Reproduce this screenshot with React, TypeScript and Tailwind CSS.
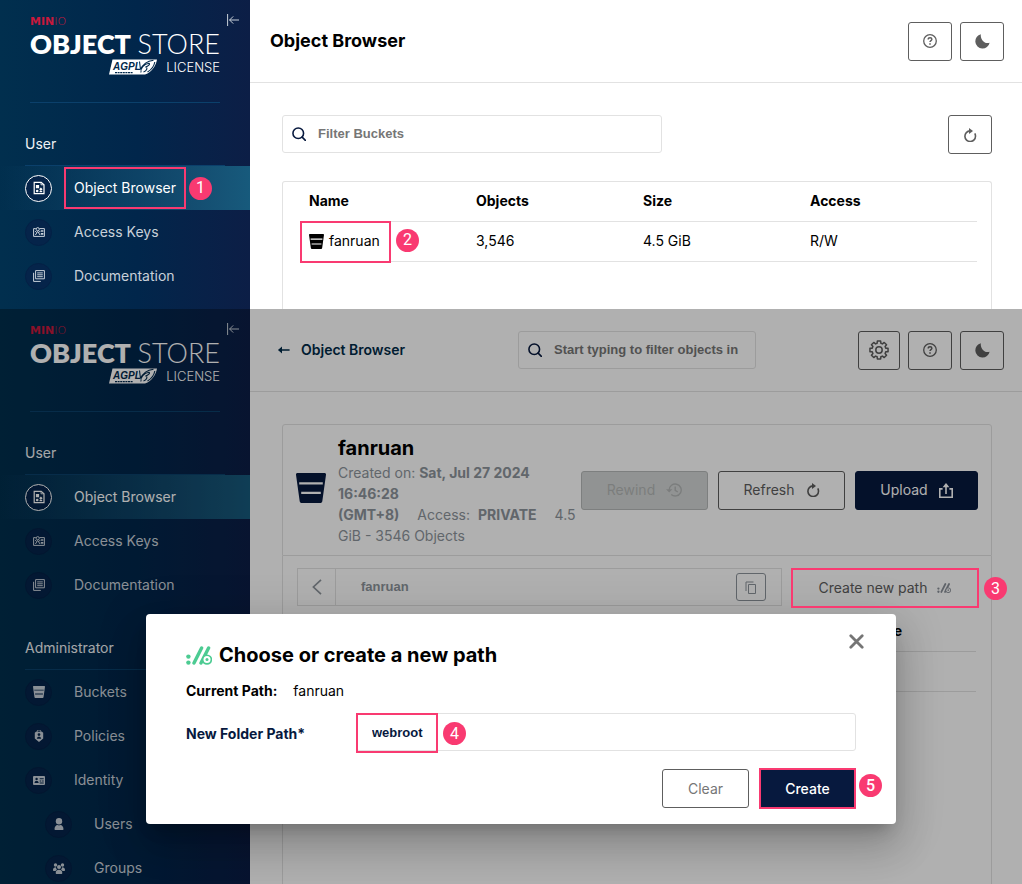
import React from "react";

type IconProps = { className?: string };

const CollapseIcon = () => (
  <svg width="12" height="12" viewBox="0 0 12 12" fill="none" stroke="currentColor" strokeWidth="1">
    <path d="M.6 0v12M2.5 6H12M6.2 2.4 2.6 6l3.6 3.6" />
  </svg>
);

const ObjectBrowserIcon = () => (
  <svg width="12" height="14" viewBox="0 0 12 14" fill="none" stroke="currentColor" strokeWidth="1.2">
    <path d="M1.2 1.4h7l2.8 2.4v8.8H1.2z" />
    <path d="M8 1.2v2.6h3" strokeWidth=".8" />
    <path d="M2.9 4.1h3.2v3.2H2.9zM7.9 6.5l1.7 1.7-1.7 1.7-1.7-1.7z" fill="currentColor" stroke="none" />
    <circle cx="4.2" cy="10" r="1.3" fill="currentColor" stroke="none" />
    <path d="M6.6 10.6h2.6" />
  </svg>
);

const AccessKeysIcon = () => (
  <svg width="12" height="10" viewBox="0 0 12 10" fill="none" stroke="currentColor" strokeWidth="1">
    <path d="M2.8 1.6H.6v7.8h10.8V1.6H6.6" />
    <circle cx="4.7" cy="2.2" r="1.6" />
    <path d="m2.4 8 2.3-3.6L7 8M2.2 4l1.4 1.6M7.2 4 5.8 5.6" />
    <path d="M7.8 3.2h2.6v1.6H7.8zM7.8 6h2.6v1.8H7.8z" fill="currentColor" stroke="none" />
  </svg>
);

const DocumentationIcon = () => (
  <svg width="12" height="12" viewBox="0 0 12 12" fill="none" stroke="currentColor" strokeWidth="1">
    <path d="M2.6.6h8.8v8.2H2.6zM.6 2.8v8.6h7.2" />
    <path d="M4.2 2.9h5.6M4.2 4.8h5.6M4.2 6.7h5.6" />
  </svg>
);

const BucketIcon = ({ className }: IconProps) => (
  <svg className={className} viewBox="0 0 30 30" fill="currentColor">
    <path d="M1.5 0h27c1 0 1.600.8 1.500 1.700L26.300 28.200c-.2 1-1 1.800-2 1.800H5.700c-1 0-1.800-.8-2-1.800L0 1.700C-.1.8.5 0 1.500 0zM3.200 9.200v2.200h23.600V9.200zM5.200 18.800V21h19.600v-2.200z" fillRule="evenodd" />
  </svg>
);

const PoliciesIcon = () => (
  <svg width="10" height="12" viewBox="0 0 10 12">
    <path d="M3.2 2V1.2C3.2.4 4 0 5 0s1.8.4 1.8 1.2V2" fill="none" stroke="currentColor" />
    <path fillRule="evenodd" fill="currentColor" d="M2 1.8h6l1.2 1v5.8L5 12 .8 8.6V2.8zM5 3.2a1.4 1.4 0 1 0 0 2.8 1.4 1.4 0 0 0 0-2.8zM2.8 8.7h4.4C7 7.3 6 6.7 5 6.7s-2 .6-2.2 2z" />
  </svg>
);

const IdentityIcon = () => (
  <svg width="12" height="9" viewBox="0 0 12 9">
    <path fillRule="evenodd" fill="currentColor" d="M1 0h10a1 1 0 0 1 1 1v7a1 1 0 0 1-1 1H1a1 1 0 0 1-1-1V1a1 1 0 0 1 1-1zm2.6 1.7a1.2 1.2 0 1 0 0 2.4 1.2 1.2 0 0 0 0-2.4zM1.5 7h4.2C5.5 5.5 4.7 4.8 3.6 4.8S1.7 5.5 1.5 7zM6.7 2.3v1h4v-1zm0 2.2v1h1.6v-1zm2.4 0v1h1.6v-1zM6.7 6.5v1h4v-1z" />
  </svg>
);

const UserIcon = () => (
  <svg width="10" height="12" viewBox="0 0 10 12" fill="currentColor">
    <circle cx="5" cy="3.2" r="3.2" />
    <path d="M.5 11.200C.5 8.500 2 7.200 3.600 7c.9.500 1.900.500 2.800 0 1.600.2 3.100 1.500 3.100 4.200 0 .5-.3.800-.8.800H1.300c-.5 0-.8-.3-.8-.8z" />
  </svg>
);

const GroupsIcon = () => (
  <svg width="12" height="11" viewBox="0 0 12 11" fill="currentColor">
    <circle cx="2.5" cy="2" r="1.7" />
    <circle cx="9.5" cy="2" r="1.7" />
    <circle cx="6" cy="4" r="2" />
    <path d="M0 6.8C0 5 1.2 4.2 2.8 4.2c.3 1.2.8 1.8 1.4 2.3-.8.3-1.3.8-1.6 1.500H.6c-.4 0-.6-.4-.6-1.200zM12 6.800c0-1.800-1.200-2.600-2.800-2.600-.3 1.200-.8 1.800-1.400 2.300.8.300 1.300.800 1.600 1.500h2c.4 0 .6-.4.6-1.200zM2.700 10c0-2 1.300-3.200 3.300-3.200S9.300 8 9.300 10c0 .6-.3 1-.8 1h-5c-.5 0-.8-.4-.8-1z" />
  </svg>
);

const SearchIcon = ({ className }: IconProps) => (
  <svg className={className} width="14" height="14" viewBox="0 0 15 15" fill="none" stroke="currentColor" strokeWidth="1.7">
    <circle cx="6.7" cy="6.7" r="5.7" />
    <path d="m10.900 10.900 3.400 3.400" strokeLinecap="round" />
  </svg>
);

const HelpIcon = () => (
  <svg width="14" height="14" viewBox="0 0 14 14" fill="none" stroke="currentColor">
    <circle cx="7" cy="7" r="6.3" strokeWidth="1.3" />
    <path d="M5.200 5.400c0-1 .8-1.600 1.900-1.600s1.800.6 1.800 1.500c0 1.300-1.900 1.300-1.900 2.700" strokeWidth="1.4" />
    <path d="M7 9.200v1.500" strokeWidth="1.5" />
  </svg>
);

const MoonIcon = () => (
  <svg width="15" height="15" viewBox="0 0 15 15" fill="currentColor">
    <path d="M5.900.3A7.200 7.200 0 1 0 14.600 8.700C12.500 9.500 10.100 9.200 8.200 7.300 6.300 5.400 5.400 2.600 5.900.3z" />
  </svg>
);

const RefreshIcon = () => (
  <svg width="14" height="14" viewBox="0 0 14 14" fill="none" stroke="currentColor" strokeWidth="1.6">
    <path d="M7 2.900A5.300 5.300 0 1 0 12.500 8.100c0-1-.3-1.900-.7-2.700" />
    <path d="M6 0l4 2.900L6 6z" fill="currentColor" stroke="none" />
  </svg>
);

const RewindIcon = () => (
  <svg width="16" height="14" viewBox="0 0 16 14" fill="none" stroke="currentColor" strokeWidth="1.4">
    <path d="M3.200 7a6 6 0 1 1 2 4.500" />
    <path d="M0 6.200h6.400L3.200 9.600z" fill="currentColor" stroke="none" />
    <path d="M9.200 3.500V7.300l2.600 1.700" />
  </svg>
);

const UploadIcon = () => (
  <svg width="14" height="15" viewBox="0 0 14 15" fill="none" stroke="currentColor" strokeWidth="1.6">
    <path d="M3.600 5.900H.8v8.300h12.400V5.900h-2.800M7 11V2" />
    <path d="M7 0l3.400 4.200H3.600z" fill="currentColor" stroke="none" />
  </svg>
);

const CopyIcon = () => (
  <svg width="12" height="13" viewBox="0 0 12 13" fill="none" stroke="currentColor" strokeWidth="1">
    <path d="M3.500 3.500h7v9h-7zM1 10V1h7.500" />
  </svg>
);

const BackArrowIcon = () => (
  <svg width="12" height="8" viewBox="0 0 12 8" fill="none" stroke="currentColor" strokeWidth="1.6">
    <path d="M1.500 4H11" strokeLinecap="round" />
    <path d="M0 4l4-3.600v7.200z" fill="currentColor" stroke="none" />
  </svg>
);

const ChevronLeftIcon = () => (
  <svg width="10" height="16" viewBox="0 0 10 16" fill="none" stroke="currentColor" strokeWidth="1.7">
    <path d="M9 .8 1.400 8 9 15.200" />
  </svg>
);

const CloseIcon = () => (
  <svg width="15" height="15" viewBox="0 0 15 15" fill="none" stroke="currentColor" strokeWidth="2.8" strokeLinecap="round">
    <path d="m1.800 1.800 11.400 11.400M13.200 1.800 1.800 13.200" />
  </svg>
);

const NewPathIcon = ({ className }: IconProps) => (
  <svg className={className} viewBox="0 0 26 19" fill="none" stroke="currentColor">
    <circle cx="2.4" cy="10.6" r="2.2" fill="currentColor" stroke="none" />
    <circle cx="2.4" cy="16.6" r="2.2" fill="currentColor" stroke="none" />
    <path d="M8 17 15.600 1.900M15 17 22.600 1.900" strokeWidth="3.4" strokeLinecap="round" />
    <circle cx="21" cy="13.6" r="5.2" fill="currentColor" stroke="none" />
    <circle cx="21" cy="13.6" r="3.5" className="fill-white stroke-none" />
    <circle cx="21" cy="13.6" r="1.5" fill="currentColor" stroke="none" />
  </svg>
);

// eight-toothed outline around a 20x20 box
const gearPath = (() => {
  const points: string[] = [];
  for (let i = 0; i < 8; i++) {
    const center = (i * Math.PI) / 4;
    const corners: [number, number][] = [[-0.27, 7], [-0.18, 9.2], [0.18, 9.2], [0.27, 7]];
    corners.forEach(([offset, r]) => {
      const a = center + offset;
      points.push(`${(10 + r * Math.cos(a)).toFixed(2)} ${(10 + r * Math.sin(a)).toFixed(2)}`);
    });
  }
  return `M${points.join("L")}Z`;
})();

const GearIcon = () => (
  <svg width="20" height="20" viewBox="0 0 20 20" fill="none" stroke="currentColor" strokeWidth="1.5" strokeLinejoin="round">
    <path d={gearPath} />
    <circle cx="10" cy="10" r="3.2" />
  </svg>
);

const AgplBadge = () => (
  <svg width="48" height="16" viewBox="0 0 48 16">
    <path d="M3.500.5H48C47 6 43 13.500 36 15.500H0z" fill="#fff" />
    <text x="4" y="10.500" fontFamily="Liberation Sans" fontSize="10" fontWeight="700" fontStyle="italic" fill="#01284b">
      AGPL
    </text>
    <path d="M6 13.600h18" stroke="#01284b" strokeWidth="1.2" strokeDasharray="2 .6" />
    <path d="M30.500 2.500l1 8M31.500 10.500C34 5 38 2.200 44.500 1.300M32 13.500c-1-4 3-8.500 8-9.200 1.500.8-.8 3-3.500 3.700 2.500.6 1.500 3.800-2 5M45.800 3c-.6 3.500-3 7.500-7.300 10" fill="none" stroke="#01284b" strokeWidth="1.1" />
  </svg>
);

const StepBadge = ({ n, className = "" }: { n: number; className?: string }) => (
  <span className={`flex h-[23px] w-[23px] shrink-0 items-center justify-center rounded-full bg-[#f93a71] font-[Roboto,sans-serif] text-base leading-none text-white ${className}`}>
    {n}
  </span>
);

const iconButton = "flex h-[39px] w-11 items-center justify-center rounded-[3px] border border-[#5e5e5e] text-[#5e5e5e] cursor-pointer";

type MenuItemProps = {
  icon: React.ReactNode;
  label: string;
  active?: boolean;
  nested?: boolean;
  step?: number;
};

const MenuItem = ({ icon, label, active, nested, step }: MenuItemProps) => (
  <a
    href="#"
    className={`flex h-11 items-center ${nested ? "pl-[45px]" : "pl-[25px]"} ${
      active ? "bg-linear-to-r from-transparent to-[#175a7c] text-white" : "text-[#c8d0d9]"
    }`}
  >
    <span className={`flex h-[27px] w-[27px] items-center justify-center rounded-full border bg-[#05244a] ${active ? "border-white" : "border-[#042045]"}`}>
      {icon}
    </span>
    <span className={`ml-3 mr-[3px] flex h-[42px] items-center border-2 px-2 ${step ? "border-[#f93a71]" : "border-transparent"}`}>
      {label}
    </span>
    {step && <StepBadge n={step} />}
  </a>
);

const SectionTitle = ({ children }: { children: React.ReactNode }) => (
  <h2 className="ml-[25px] mr-[25px] mt-5 flex h-[43px] items-center border-b border-[#0b406b] text-[#eef1f4]">{children}</h2>
);

const Sidebar = ({ full = false }: { full?: boolean }) => (
  <aside className="w-[250px] shrink-0 bg-linear-to-r from-[#012f4e] via-[#01264b] via-55% to-[#0c1e46] pb-[11px] pt-4">
    <div className="flex items-start pl-[30px] text-white">
      <div className="w-[190px] border-b border-[#0b406b] pb-[26px]">
        <p className="mb-[2px] font-['DejaVu_Sans',sans-serif] text-[11px] leading-3 text-[#c8193c]">
          <b>MIN</b>
          <span className="font-extralight">IO</span>
        </p>
        <p className="flex justify-between whitespace-nowrap font-[Lato,sans-serif] text-[27px] leading-7">
          <span className="font-extrabold">OBJECT</span>
          <span className="font-light">STORE</span>
        </p>
        <p className="flex h-[18px] items-center justify-end gap-[9px] text-[13px] font-light">
          <AgplBadge />
          LICENSE
        </p>
      </div>
      <button type="button" aria-label="Collapse menu" className="-mt-[2px] ml-[7px] cursor-pointer text-[#c8d0d9]">
        <CollapseIcon />
      </button>
    </div>
    <nav>
      <SectionTitle>User</SectionTitle>
      <MenuItem icon={<ObjectBrowserIcon />} label="Object Browser" active step={full ? undefined : 1} />
      <MenuItem icon={<AccessKeysIcon />} label="Access Keys" />
      <MenuItem icon={<DocumentationIcon />} label="Documentation" />
      {full && (
        <>
          <SectionTitle>Administrator</SectionTitle>
          <MenuItem icon={<BucketIcon className="h-3 w-3" />} label="Buckets" />
          <MenuItem icon={<PoliciesIcon />} label="Policies" />
          <MenuItem icon={<IdentityIcon />} label="Identity" />
          <MenuItem icon={<UserIcon />} label="Users" nested />
          <MenuItem icon={<GroupsIcon />} label="Groups" nested />
        </>
      )}
    </nav>
  </aside>
);

const SearchBox = ({ placeholder, className }: { placeholder: string; className: string }) => (
  <label className={`flex h-[38px] items-center rounded-[3px] border border-[#e2e2e2] pl-[9px] text-[#07193e] ${className}`}>
    <SearchIcon className="shrink-0" />
    <input
      type="text"
      aria-label={placeholder}
      placeholder={placeholder}
      className="ml-3 min-w-0 flex-1 bg-transparent font-['Liberation_Sans',Arial,sans-serif] text-[13px] font-bold outline-none placeholder:text-[#767676]"
    />
  </label>
);

const BucketList = () => (
  <section className="flex shrink-0">
    <Sidebar />
    <main className="flex flex-1 flex-col bg-white">
      <header className="flex h-[83px] items-center border-b border-[#e2e2e2] pl-5 pr-[18px]">
        <h1 className="flex-1 text-lg font-bold text-black">Object Browser</h1>
        <div className="flex gap-2">
          <button type="button" aria-label="Help" className={iconButton}>
            <HelpIcon />
          </button>
          <button type="button" aria-label="Dark mode" className={iconButton}>
            <MoonIcon />
          </button>
        </div>
      </header>
      <div className="flex flex-1 flex-col pl-8 pr-[30px] pt-8">
        <div className="flex justify-between">
          <SearchBox placeholder="Filter Buckets" className="w-[380px]" />
          <button type="button" aria-label="Refresh" className={iconButton}>
            <RefreshIcon />
          </button>
        </div>
        <div className="mt-[27px] flex-1 rounded-t-[3px] border border-b-0 border-[#e2e2e2] pl-[17px] pr-[14px]">
          <table className="w-full table-fixed text-left text-black">
            <thead>
              <tr className="h-[39px] border-b border-[#e2e2e2]">
                <th className="w-44 pl-[9px] font-bold">Name</th>
                <th className="font-bold">Objects</th>
                <th className="font-bold">Size</th>
                <th className="font-bold">Access</th>
              </tr>
            </thead>
            <tbody>
              <tr className="h-10 border-b border-[#e2e2e2]">
                <td className="relative pl-[9px]">
                  <a href="#" className="flex items-center gap-[5px]">
                    <BucketIcon className="h-[15px] w-[15px]" />
                    fanruan
                  </a>
                  <span className="absolute -top-px left-0 h-[42px] w-[91px] border-2 border-[#f93a71]" />
                  <StepBadge n={2} className="absolute left-[96px] top-[7px]" />
                </td>
                <td>3,546</td>
                <td>4.5 GiB</td>
                <td>R/W</td>
              </tr>
            </tbody>
          </table>
        </div>
      </div>
    </main>
  </section>
);

const textButton = "flex h-[39px] items-center justify-center rounded-[3px] border";

const NewPathDialog = () => (
  <div className="absolute inset-0 z-10 flex items-start justify-center bg-black/31 pl-5 pt-[305px]">
    <form
      role="dialog"
      aria-labelledby="dialog-title"
      onSubmit={(e) => e.preventDefault()}
      className="w-[750px] rounded-[4px] bg-white px-10 pb-4 pt-7 text-black shadow-[0_11px_15px_-7px_rgba(0,0,0,0.2),0_24px_38px_3px_rgba(0,0,0,0.14),0_9px_46px_8px_rgba(0,0,0,0.12)]"
    >
      <div className="flex items-start">
        <h2 id="dialog-title" className="flex h-[26px] flex-1 items-center gap-[7px] text-xl font-bold">
          <NewPathIcon className="h-[19px] w-[26px] text-[#4ccb92]" />
          Choose or create a new path
        </h2>
        <button type="button" aria-label="Close" className="-mr-2 -mt-2 cursor-pointer text-[#757575]">
          <CloseIcon />
        </button>
      </div>
      <p className="mt-3 flex h-[22px] items-center gap-4">
        <b className="font-bold">Current Path:</b>
        fanruan
      </p>
      <div className="mt-[11px] flex items-center">
        <label htmlFor="folder-path" className="w-[170px] pt-1 font-bold text-[#07193e]">
          New Folder Path*
        </label>
        <div className="relative flex-1">
          <input
            id="folder-path"
            type="text"
            defaultValue="webroot"
            className="block h-[38px] w-full rounded-[3px] border border-[#e2e2e2] px-[15px] font-['Liberation_Sans',Arial,sans-serif] text-[13px] font-bold text-[#07193e] outline-none"
          />
          <span className="pointer-events-none absolute left-0 top-0 h-10 w-[82px] border-2 border-[#f93a71]" />
          <StepBadge n={4} className="absolute left-[87px] top-[9px]" />
        </div>
      </div>
      <div className="mt-[18px] flex justify-end gap-[11px] pr-px">
        <button type="reset" className={`${textButton} w-[87px] border-[#5e5e5e] text-[#767676]`}>
          Clear
        </button>
        <button type="submit" className={`${textButton} relative w-[95px] border-[#07193e] bg-[#07193e] font-medium text-white`}>
          Create
          <span className="absolute -inset-[2px] border-2 border-[#f93a71]" />
          <StepBadge n={5} className="absolute left-[98px] top-1" />
        </button>
      </div>
    </form>
  </div>
);

const BucketDetail = () => (
  <section className="relative flex min-h-0 flex-1 overflow-hidden">
    <Sidebar full />
    <main className="flex flex-1 flex-col bg-white">
      <header className="flex h-[83px] shrink-0 items-center border-b border-[#e2e2e2] pl-7 pr-[18px]">
        <a href="#" className="flex w-[240px] items-center gap-[11px] font-semibold text-[#012b48]">
          <BackArrowIcon />
          Object Browser
        </a>
        <SearchBox placeholder="Start typing to filter objects in" className="w-[238px]" />
        <div className="ml-auto flex gap-2">
          <button type="button" aria-label="Settings" className="flex h-[39px] w-[42px] cursor-pointer items-center justify-center rounded-[3px] border border-[#5e5e5e] text-[#5e5e5e]">
            <GearIcon />
          </button>
          <button type="button" aria-label="Help" className={iconButton}>
            <HelpIcon />
          </button>
          <button type="button" aria-label="Dark mode" className={iconButton}>
            <MoonIcon />
          </button>
        </div>
      </header>
      <div className="flex flex-1 flex-col pl-8 pr-[30px] pt-8">
        <div className="flex items-center rounded-t-[3px] border border-[#e2e2e2] px-[13px] py-[9px]">
          <BucketIcon className="mb-1 h-[30px] w-[30px] shrink-0 text-[#07193e]" />
          <div className="ml-3 min-w-0 flex-1 whitespace-nowrap leading-[21px] text-[#8d949b]">
            <h1 className="text-xl font-bold leading-7 text-black">fanruan</h1>
            <p>
              Created on: <b className="font-bold">Sat, Jul 27 2024</b>
            </p>
            <p>
              <b className="font-bold">16:46:28</b>
            </p>
            <p className="flex">
              <b className="mr-[18px] font-bold">(GMT+8)</b>
              Access: <b className="ml-2 mr-[18px] font-bold">PRIVATE</b>
              4.5
            </p>
            <p>GiB - 3546 Objects</p>
          </div>
          <div className="flex gap-[10px]">
            <button type="button" disabled className={`${textButton} w-[127px] gap-[11px] border-[#b5b9b8] bg-[#d3d6d5] text-[#b3b6b6]`}>
              Rewind
              <RewindIcon />
            </button>
            <button type="button" className={`${textButton} w-[127px] gap-[11px] border-[#5e5e5e] text-[#5e5e5e]`}>
              Refresh
              <RefreshIcon />
            </button>
            <button type="button" className={`${textButton} w-[123px] gap-[11px] border-[#07193e] bg-[#07193e] text-white`}>
              Upload
              <UploadIcon />
            </button>
          </div>
        </div>
        <div className="flex-1 border-x border-[#e2e2e2] pt-3">
          <div className="flex gap-[9px] pl-[14px] pr-3">
            <div className="flex h-[38px] flex-1 items-center border border-[#e2e2e2] pr-[15px] text-[#8d949b]">
              <button type="button" aria-label="Back" className="flex h-full w-[38px] items-center justify-center border-r border-[#e2e2e2]">
                <ChevronLeftIcon />
              </button>
              <a href="#" className="flex-1 pl-[25px] font-['Liberation_Sans',Arial,sans-serif] text-[13px] font-bold">
                fanruan
              </a>
              <button type="button" aria-label="Copy path" className="flex h-7 w-[30px] items-center justify-center rounded-[3px] border border-[#8d949b]">
                <CopyIcon />
              </button>
            </div>
            <button type="button" className="relative flex h-10 w-[188px] items-center justify-center gap-[10px] text-[#5e5e5e]">
              Create new path
              <NewPathIcon className="h-[10px] w-[14px] text-[#8a9099]" />
              <span className="absolute inset-0 z-20 border-2 border-[#f93a71]" />
              <StepBadge n={3} className="absolute left-[193px] top-[9px] z-20" />
            </button>
          </div>
          <div className="mt-1 pl-[14px] pr-[15px]">
            <table className="w-full table-fixed text-left text-black">
              <thead>
                <tr className="h-[39px] border-b border-[#e2e2e2]">
                  <td />
                  <td />
                  <th className="w-[103px] font-bold">Size</th>
                </tr>
              </thead>
              <tbody>
                <tr className="h-10 border-b border-[#e2e2e2]">
                  <td colSpan={3} />
                </tr>
              </tbody>
            </table>
          </div>
        </div>
      </div>
    </main>
    <NewPathDialog />
  </section>
);

export default function App() {
  return (
    <div className="flex h-screen flex-col overflow-hidden font-[Inter,sans-serif] text-sm">
      <BucketList />
      <BucketDetail />
    </div>
  );
}
